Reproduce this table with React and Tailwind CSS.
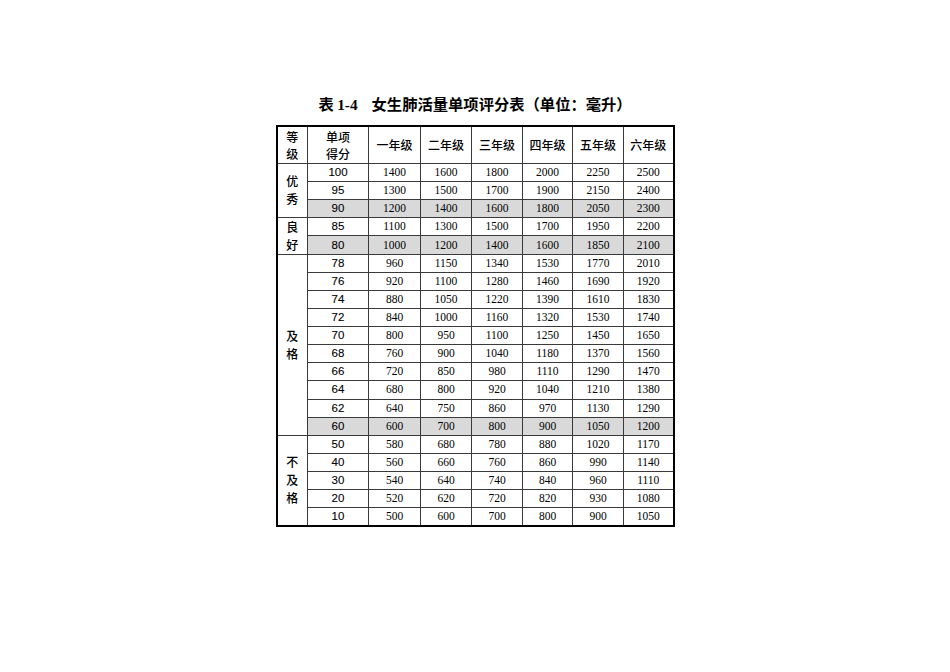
import React from "react";

const grades = ["一年级", "二年级", "三年级", "四年级", "五年级", "六年级"];

// score, values, grey row
const rows = [
  [100, [1400, 1600, 1800, 2000, 2250, 2500], false],
  [95, [1300, 1500, 1700, 1900, 2150, 2400], false],
  [90, [1200, 1400, 1600, 1800, 2050, 2300], true],
  [85, [1100, 1300, 1500, 1700, 1950, 2200], false],
  [80, [1000, 1200, 1400, 1600, 1850, 2100], true],
  [78, [960, 1150, 1340, 1530, 1770, 2010], false],
  [76, [920, 1100, 1280, 1460, 1690, 1920], false],
  [74, [880, 1050, 1220, 1390, 1610, 1830], false],
  [72, [840, 1000, 1160, 1320, 1530, 1740], false],
  [70, [800, 950, 1100, 1250, 1450, 1650], false],
  [68, [760, 900, 1040, 1180, 1370, 1560], false],
  [66, [720, 850, 980, 1110, 1290, 1470], false],
  [64, [680, 800, 920, 1040, 1210, 1380], false],
  [62, [640, 750, 860, 970, 1130, 1290], false],
  [60, [600, 700, 800, 900, 1050, 1200], true],
  [50, [580, 680, 780, 880, 1020, 1170], false],
  [40, [560, 660, 760, 860, 990, 1140], false],
  [30, [540, 640, 740, 840, 960, 1110], false],
  [20, [520, 620, 720, 820, 930, 1080], false],
  [10, [500, 600, 700, 800, 900, 1050], false],
];

// level label starts at row index, spans n rows
const levels = {
  0: { span: 3, chars: ["优", "秀"] },
  3: { span: 2, chars: ["良", "好"] },
  5: { span: 10, chars: ["及", "格"] },
  15: { span: 5, chars: ["不", "及", "格"] },
};

const cjk = "font-['Noto_Sans_CJK_SC',sans-serif]";
const cell = "border border-[#3a3a3a] p-0 text-center align-middle";

export default function App() {
  return (
    <div className="w-[950px] h-[672px] bg-white pt-[93px]">
      {/* title */}
      <div className={`text-center text-[15.3px] leading-[20px] font-bold text-black ${cjk}`}>
        表 <span className="font-['Liberation_Serif',serif]">1-4</span>
        <span className="inline-block w-[14px]"></span>
        女生肺活量单项评分表（单位：毫升）
      </div>

      <table className="mx-auto mt-[10px] border-collapse border-2 border-black table-fixed w-[397px] text-black">
        <colgroup>
          <col className="w-[31px]" />
          <col className="w-[61px]" />
          <col className="w-[52px]" />
          <col className="w-[51px]" />
          <col className="w-[51px]" />
          <col className="w-[50px]" />
          <col className="w-[51px]" />
          <col className="w-[50px]" />
        </colgroup>
        <thead>
          <tr className="h-[37px]">
            <th className={`${cell} ${cjk} font-medium text-[12px] leading-[17px]`}>
              等<br />级
            </th>
            <th className={`${cell} ${cjk} font-medium text-[12px] leading-[17px]`}>
              单项<br />得分
            </th>
            {grades.map((g) => (
              <th key={g} className={`${cell} ${cjk} font-medium text-[12px]`}>
                {g}
              </th>
            ))}
          </tr>
        </thead>
        <tbody>
          {rows.map(([score, vals, grey], i) => (
            <tr key={score} className="h-[18.1px]">
              {levels[i] && (
                <td
                  rowSpan={levels[i].span}
                  className={`${cell} ${cjk} font-medium text-[12px] leading-[18px] bg-white`}
                >
                  {levels[i].chars.map((c, k) => (
                    <div key={k}>{c}</div>
                  ))}
                </td>
              )}
              <td
                className={`${cell} font-['Liberation_Sans',sans-serif] text-[11.5px] leading-[17px] [-webkit-text-stroke:0.1px] ${grey ? "bg-[#d9d9d9]" : ""}`}
              >
                {score}
              </td>
              {vals.map((v, k) => (
                <td
                  key={k}
                  className={`${cell} font-['Liberation_Serif',serif] text-[11.5px] leading-[17px] ${grey ? "bg-[#d9d9d9]" : ""}`}
                >
                  {v}
                </td>
              ))}
            </tr>
          ))}
        </tbody>
      </table>
    </div>
  );
}
